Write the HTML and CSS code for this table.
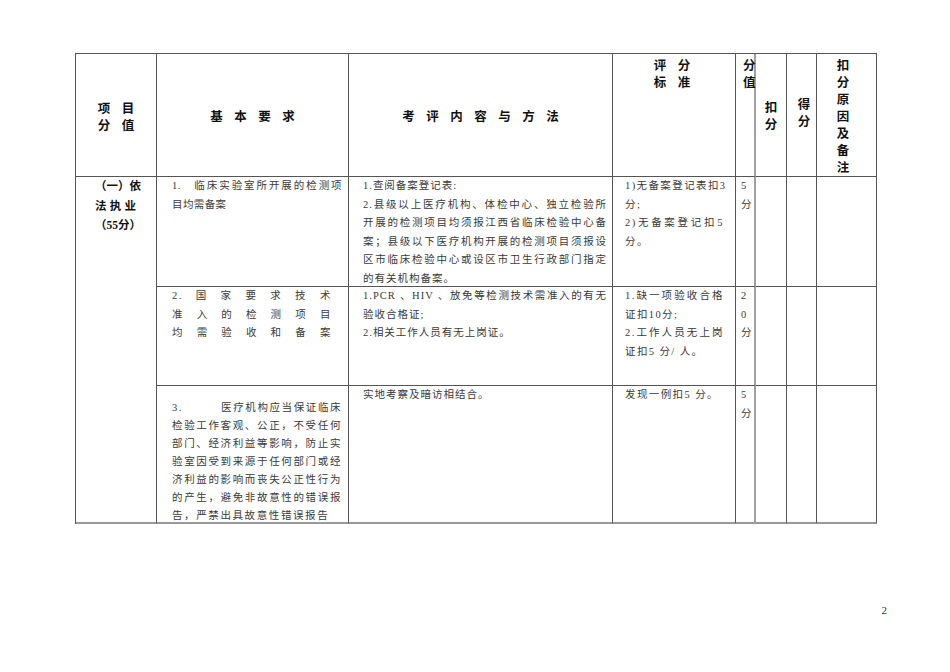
FILE: index.html
```html
<!DOCTYPE html>
<html lang="zh-CN">
<head>
<meta charset="utf-8">
<title>评分表</title>
<link rel="stylesheet" href="styles.css">
</head>
<body>
<div class="page">
  <div class="sheet">
    <div class="c h h-mid h-item"><span class="sp">项目</span><span class="sp">分值</span></div>
    <div class="c h h-mid"><span class="sp">基本要求</span></div>
    <div class="c h h-mid"><span class="sp">考评内容与方法</span></div>
    <div class="c h h-top h-std"><span class="sp">评分</span><span class="sp">标准</span></div>
    <div class="c h h-top h-val v">分值</div>
    <div class="c h h-mid">扣<br>分</div>
    <div class="c h h-mid h-got">得<br>分</div>
    <div class="c h h-top h-note">扣<br>分<br>原<br>因<br>及<br>备<br>注</div>

    <div class="c d cat last">
      <span class="j">（一）依</span>
      <span class="j">法执业</span>
      <span class="l">（55分）</span>
    </div>

    <div class="c d req r1">
      <span class="j">1.&nbsp;&nbsp; 临床实验室所开展的检测项</span>
      <span class="l">目均需备案</span>
    </div>
    <div class="c d cont">
      <span class="l">1.查阅备案登记表:</span>
      <span class="j">2.县级以上医疗机构、体检中心、独立检验所</span>
      <span class="j">开展的检测项目均须报江西省临床检验中心备</span>
      <span class="j">案；县级以下医疗机构开展的检测项目须报设</span>
      <span class="j">区市临床检验中心或设区市卫生行政部门指定</span>
      <span class="l">的有关机构备案。</span>
    </div>
    <div class="c d std">
      <span class="j">1)无备案登记表扣3</span>
      <span class="l">分;</span>
      <span class="j">2)无备案登记扣5</span>
      <span class="l">分。</span>
    </div>
    <div class="c d val v">5<br>分</div>
    <div class="c d"></div>
    <div class="c d"></div>
    <div class="c d"></div>

    <div class="c d req r2">
      <span class="j">2.国家要求技术</span>
      <span class="j">准入的检测项目</span>
      <span class="j">均需验收和备案</span>
    </div>
    <div class="c d cont">
      <span class="j">1.PCR 、HIV 、放免等检测技术需准入的有无</span>
      <span class="l">验收合格证;</span>
      <span class="l">2.相关工作人员有无上岗证。</span>
    </div>
    <div class="c d std">
      <span class="j">1.缺一项验收合格</span>
      <span class="l">证扣10分;</span>
      <span class="j">2.工作人员无上岗</span>
      <span class="l">证扣5 分/ 人。</span>
    </div>
    <div class="c d val v">2<br>0<br>分</div>
    <div class="c d"></div>
    <div class="c d"></div>
    <div class="c d"></div>

    <div class="c d req r3 last">
      <span class="j">3.&nbsp;&nbsp;&nbsp;&nbsp;&nbsp;&nbsp;&nbsp;&nbsp; 医疗机构应当保证临床</span>
      <span class="j">检验工作客观、公正，不受任何</span>
      <span class="j">部门、经济利益等影响，防止实</span>
      <span class="j">验室因受到来源于任何部门或经</span>
      <span class="j">济利益的影响而丧失公正性行为</span>
      <span class="j">的产生，避免非故意性的错误报</span>
      <span class="l">告，严禁出具故意性错误报告</span>
    </div>
    <div class="c d cont last">
      <span class="l">实地考察及暗访相结合。</span>
    </div>
    <div class="c d std last">
      <span class="l">发现一例扣5 分。</span>
    </div>
    <div class="c d val v last">5<br>分</div>
    <div class="c d last"></div>
    <div class="c d last"></div>
    <div class="c d last"></div>
  </div>
  <div class="pageno">2</div>
</div>
</body>
</html>
```

FILE: styles.css
```css
html, body {
  margin: 0;
  padding: 0;
  background: #ffffff;
}

.page {
  width: 950px;
  height: 672px;
  box-sizing: border-box;
  padding: 53px 0 0 75px;
  display: flex;
  flex-direction: column;
  font-family: "Liberation Serif", "Noto Sans CJK SC", serif;
  color: #3a3a3a;
}

.sheet {
  display: grid;
  grid-template-columns: 81px 192px 264px 123px 20px 31px 30px 60px;
  grid-template-rows: 123px 110px 99px 138px;
  border-top: 1px solid #555555;
  border-left: 1px solid #555555;
  width: max-content;
}

.c {
  box-sizing: border-box;
  border-right: 1px solid #555555;
  border-bottom: 1px solid #555555;
  min-width: 0;
}

.c.v {
  border-right: 2px solid #a0a0a0;
}

.c.last {
  border-bottom: 2px solid #999999;
}

/* header */
.h {
  font-family: "Noto Sans CJK SC", sans-serif;
  font-weight: 700;
  font-size: 12.5px;
  line-height: 17px;
  color: #111111;
}

.h-mid {
  display: flex;
  flex-direction: column;
  align-items: center;
  justify-content: center;
  text-align: center;
}

.h-top {
  display: flex;
  flex-direction: column;
  align-items: center;
  padding-top: 2px;
  text-align: center;
}

.sp {
  display: block;
  letter-spacing: 11.5px;
  padding-left: 11.5px;
}

.h-item {
  padding-top: 2px;
}

.h-std {
  padding-right: 4px;
}

.h-val {
  align-items: flex-start;
  padding-left: 7px;
}

.h-got {
  padding-left: 5px;
  padding-bottom: 7px;
}

.h-note {
  padding-right: 7px;
}

/* data */
.d {
  font-size: 10.5px;
  line-height: 18.5px;
  padding-top: 0;
}

.j {
  display: block;
  white-space: nowrap;
  text-align: justify;
  text-align-last: justify;
}

.l {
  display: block;
  white-space: nowrap;
}

.cat {
  grid-row: span 3;
  font-weight: 700;
  color: #111111;
  font-size: 11.5px;
  padding-left: 19px;
  padding-top: 0;
  line-height: 19.5px;
}

.cat .j,
.cat .l {
  width: 41px;
}

.req {
  padding-left: 15px;
  padding-right: 6px;
  letter-spacing: 1.6px;
}

.req.r1 {
  letter-spacing: 0.4px;
}

.req.r2 {
  padding-right: 16px;
}

.req.r3 {
  padding-top: 13px;
  line-height: 18px;
}

.cont {
  padding-left: 14px;
  padding-right: 5px;
  letter-spacing: 1px;
}

.std {
  padding-left: 12px;
  padding-right: 11px;
  letter-spacing: 1.4px;
}

.val {
  padding-left: 5px;
}

.pageno {
  margin-top: 80px;
  padding-right: 63px;
  text-align: right;
  font-size: 11px;
  line-height: 13px;
  color: #333333;
}
```
